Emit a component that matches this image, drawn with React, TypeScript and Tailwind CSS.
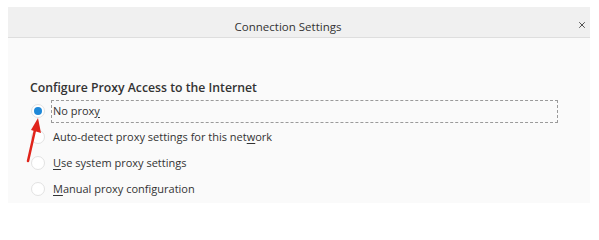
import { X } from 'lucide-react';

type Option = { id: string; before: string; key: string; after: string };

const options: Option[] = [
  { id: 'none', before: 'No prox', key: 'y', after: '' },
  { id: 'auto', before: 'Auto-detect proxy settings for this net', key: 'w', after: 'ork' },
  { id: 'system', before: '', key: 'U', after: 'se system proxy settings' },
  { id: 'manual', before: '', key: 'M', after: 'anual proxy configuration' },
];

function Radio({ checked }: { checked: boolean }) {
  return (
    <span className="flex h-[14px] w-[14px] shrink-0 items-center justify-center rounded-full border border-[#e2e2e2] bg-white">
      {checked && <span className="h-[8px] w-[8px] rounded-full bg-[#1e88d8]" />}
    </span>
  );
}

export default function App() {
  const selected = 'none';

  return (
    <div className="h-[211px] w-[599px] bg-white pl-[8px] pt-[7px] font-['Open_Sans',sans-serif] text-[#333]">
      <div className="relative h-[196px] w-[582px] bg-[#fafafa]">
        {/* Header */}
        <div className="flex h-[31px] items-center justify-center border-b border-[#dedede] bg-[#f0f0f0] pr-[22px] pt-[9px]">
          <span className="text-[11.5px] leading-[16px] text-[#333]">Connection Settings</span>
          <X className="absolute right-[3px] top-[13px] h-[10px] w-[10px] text-[#444]" strokeWidth={2.2} />
        </div>

        {/* Body */}
        <div className="px-[22px] pt-[41px]">
          <h2 className="text-[12.25px] font-semibold leading-[18px] text-[#333]">Configure Proxy Access to the Internet</h2>
          <div className="mt-[1px] flex flex-col">
            {options.map((o) => (
              <label key={o.id} className="flex h-[26px] items-center gap-[6px] pl-[1px]">
                <Radio checked={o.id === selected} />
                <span
                  className={
                    'flex h-[23px] items-center px-[1px] text-[11px] ' +
                    (o.id === selected ? 'w-[507px] border border-dashed border-[#9a9a9a]' : 'border border-transparent')
                  }
                >
                  {o.before}
                  <span className="underline underline-offset-2">{o.key}</span>
                  {o.after}
                </span>
              </label>
            ))}
          </div>
        </div>

        {/* Red annotation arrow */}
        <svg className="absolute left-[16px] top-[109px]" width="20" height="48" viewBox="0 0 20 48">
          <line x1="4" y1="45" x2="11" y2="14" stroke="#e0241b" strokeWidth="2.5" strokeLinecap="round" />
          <polygon points="14,2 17,17 7,14" fill="#e0241b" />
        </svg>
      </div>
    </div>
  );
}
